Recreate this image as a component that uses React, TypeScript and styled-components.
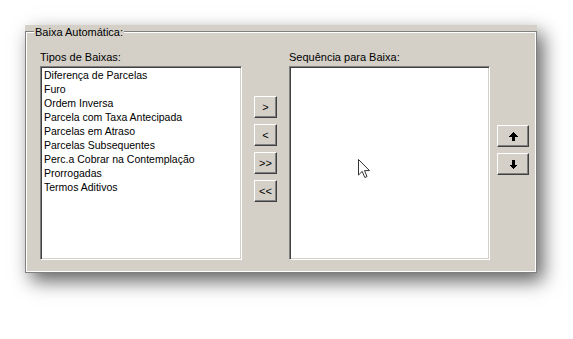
import React from 'react';
import styled, { createGlobalStyle } from 'styled-components';

const GlobalStyle = createGlobalStyle`
  html, body {
    margin: 0;
    padding: 0;
    background: #ffffff;
  }
  body {
    font-family: 'Liberation Sans', Arial, sans-serif;
    font-size: 10.5px;
    color: #000;
  }
`;

const Page = styled.div`
  padding: 25px 0 0 25px;
  width: 573px;
  height: 339px;
  box-sizing: border-box;
`;

const Panel = styled.div`
  width: 512px;
  background: #d4d0c8;
  padding-top: 6px;
  box-shadow: 6px 8px 18px rgba(0, 0, 0, 0.62);
`;

const Group = styled.div`
  position: relative;
  display: flex;
  align-items: flex-start;
  border: 1px solid #808080;
  box-shadow: inset 1px 1px 0 #ffffff, inset -1px -1px 0 #ffffff;
  padding: 18px 7px 12px 14px;
`;

const Caption = styled.span`
  position: absolute;
  top: -7px;
  left: 8px;
  padding: 0 1px;
  line-height: 14px;
  font-size: 11px;
  background: #d4d0c8;
`;

const Column = styled.div<{ $width: number }>`
  display: flex;
  flex-direction: column;
  width: ${p => p.$width}px;
`;

const Label = styled.div`
  line-height: 14px;
  height: 14px;
  margin-bottom: 2px;
  font-size: 11px;
`;

const ListBox = styled.div`
  position: relative;
  height: 194px;
  box-sizing: border-box;
  background: #ffffff;
  border-style: solid;
  border-width: 1px;
  border-color: #808080 #ffffff #ffffff #808080;
  box-shadow: inset 1px 1px 0 #404040, inset -1px -1px 0 #d4d0c8;
  padding: 1px 2px 1px 3px;
`;

const Item = styled.div`
  line-height: 14px;
  height: 14px;
  white-space: nowrap;
`;

const ButtonStack = styled.div<{ $top: number; $gap: number }>`
  display: flex;
  flex-direction: column;
  gap: ${p => p.$gap}px;
  margin-top: ${p => p.$top}px;
`;

const Button = styled.button<{ $width: number }>`
  width: ${p => p.$width}px;
  height: 22px;
  padding: 0;
  margin: 0;
  display: flex;
  align-items: center;
  justify-content: center;
  background: #d4d0c8;
  border-style: solid;
  border-width: 1px;
  border-color: #ffffff #404040 #404040 #ffffff;
  box-shadow: inset -1px -1px 0 #808080;
  font-family: 'Liberation Sans', Arial, sans-serif;
  font-size: 11px;
  color: #000;
`;

const Cursor = styled.svg`
  position: absolute;
  left: 68px;
  top: 92px;
`;

const items = [
  'Diferença de Parcelas',
  'Furo',
  'Ordem Inversa',
  'Parcela com Taxa Antecipada',
  'Parcelas em Atraso',
  'Parcelas Subsequentes',
  'Perc.a Cobrar na Contemplação',
  'Prorrogadas',
  'Termos Aditivos',
];

const ArrowUp = () => (
  <svg width="9" height="9" viewBox="0 0 9 9" shapeRendering="crispEdges">
    <polygon points="4.5,0 9,4.5 6,4.5 6,9 3,9 3,4.5 0,4.5" fill="#000" />
  </svg>
);

const ArrowDown = () => (
  <svg width="9" height="9" viewBox="0 0 9 9" shapeRendering="crispEdges">
    <polygon points="3,0 6,0 6,4.5 9,4.5 4.5,9 0,4.5 3,4.5" fill="#000" />
  </svg>
);

const App: React.FC = () => {
  return (
    <Page>
      <GlobalStyle />
      <Panel>
        <Group>
          <Caption>Baixa Automática:</Caption>
          <Column $width={202}>
            <Label>Tipos de Baixas:</Label>
            <ListBox>
              {items.map(item => (
                <Item key={item}>{item}</Item>
              ))}
            </ListBox>
          </Column>
          <ButtonStack $top={46} $gap={6} style={{ marginLeft: 12, marginRight: 12 }}>
            <Button $width={23}>&gt;</Button>
            <Button $width={23}>&lt;</Button>
            <Button $width={23}>&gt;&gt;</Button>
            <Button $width={23}>&lt;&lt;</Button>
          </ButtonStack>
          <Column $width={201}>
            <Label>Sequência para Baixa:</Label>
            <ListBox>
              <Cursor width="13" height="20" viewBox="0 0 13 20">
                <path
                  d="M0.5 0.5 L0.5 16 L4.2 12.4 L6.8 18.5 L9 17.6 L6.5 11.6 L11.5 11.6 Z"
                  fill="#fff"
                  stroke="#333"
                  strokeWidth="1"
                  strokeLinejoin="miter"
                />
              </Cursor>
            </ListBox>
          </Column>
          <ButtonStack $top={75} $gap={6} style={{ marginLeft: 7 }}>
            <Button $width={32}><ArrowUp /></Button>
            <Button $width={32}><ArrowDown /></Button>
          </ButtonStack>
        </Group>
      </Panel>
    </Page>
  );
};

export default App;
